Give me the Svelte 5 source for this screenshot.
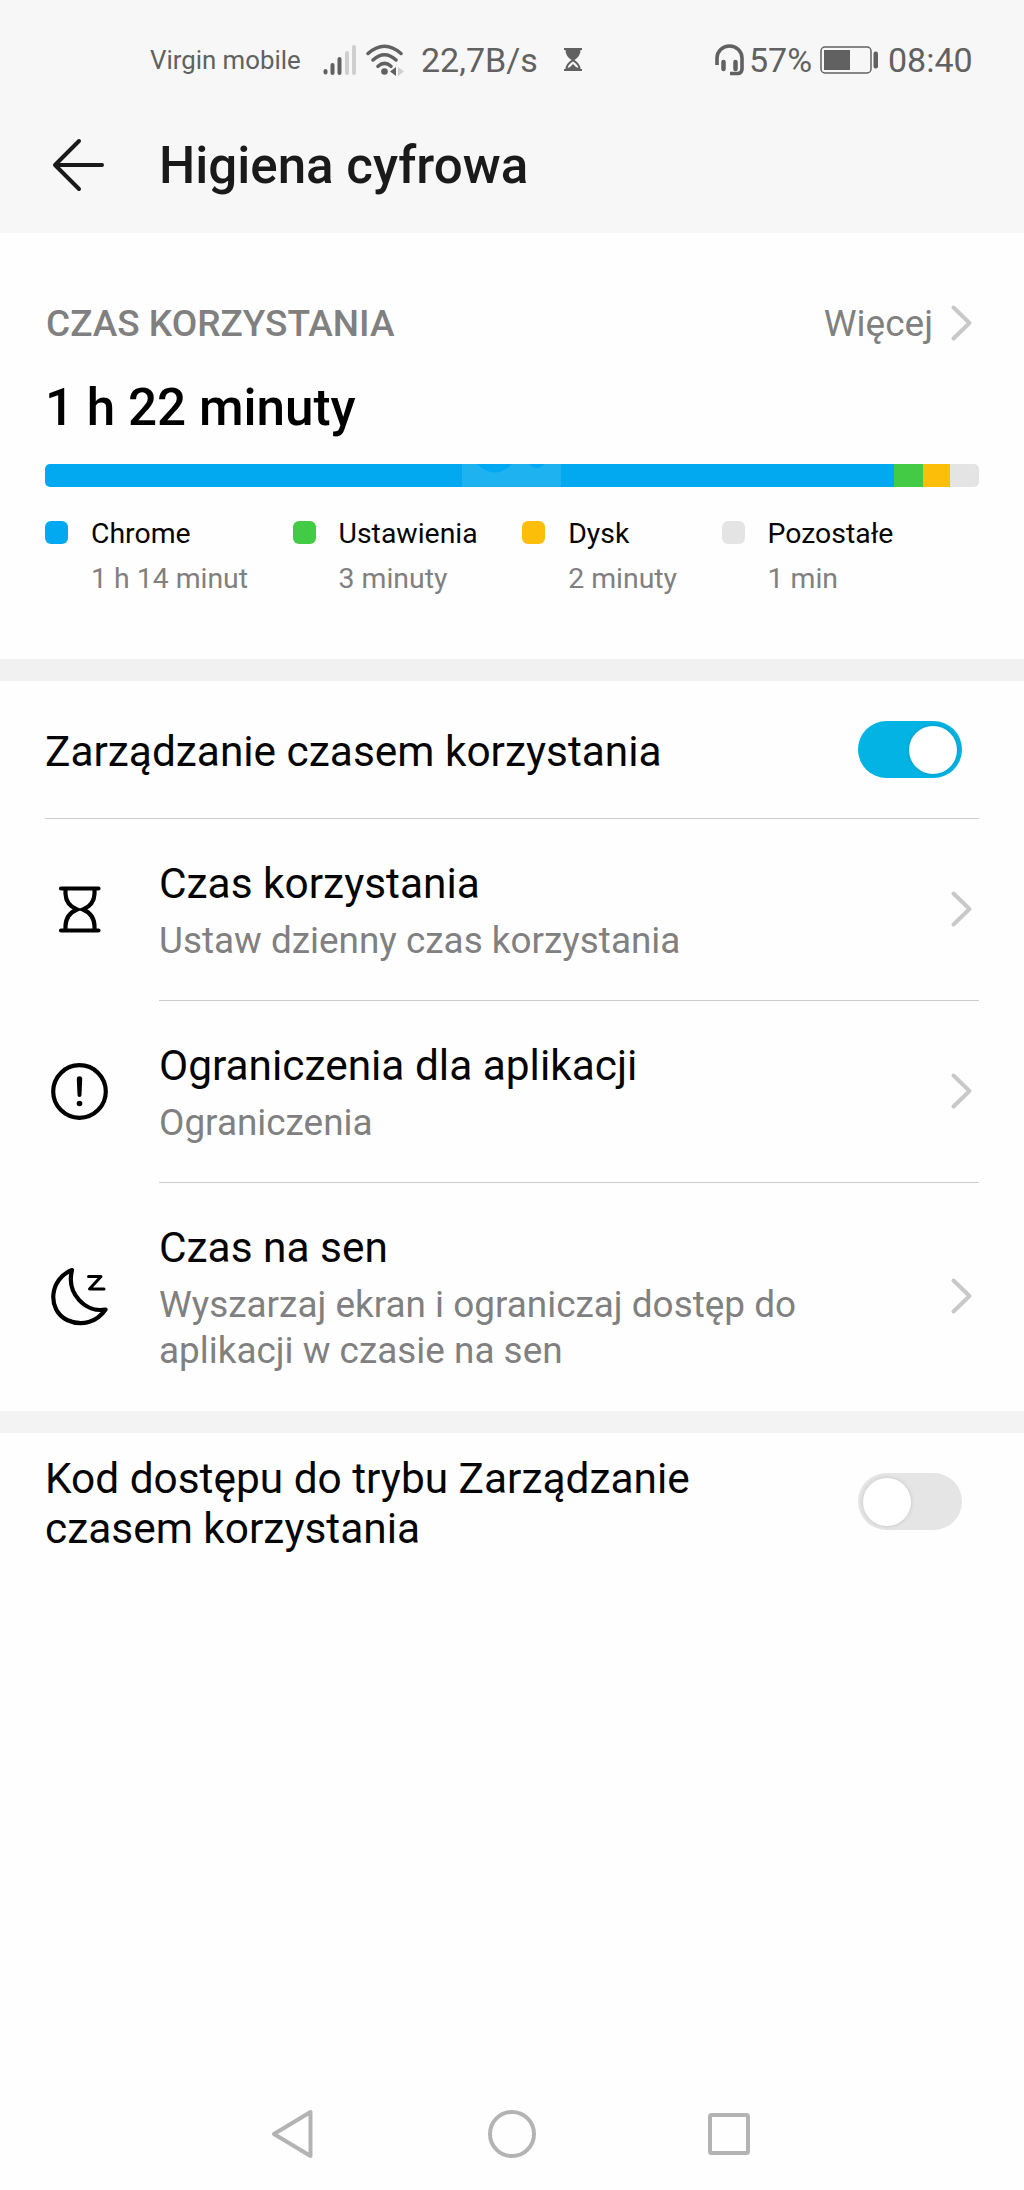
<script>
    let manageTime = true;
    let passcode = false;

    const apps = [
        { name: "Chrome", time: "1 h 14 minut", color: "#03a9f0", width: 849 },
        { name: "Ustawienia", time: "3 minuty", color: "#44cb46", width: 28.5 },
        { name: "Dysk", time: "2 minuty", color: "#fdbe09", width: 27.5 },
        { name: "Pozostałe", time: "1 min", color: "#e4e4e4", width: 29 }
    ];

    const options = [
        { icon: "hourglass", title: "Czas korzystania", text: "Ustaw dzienny czas korzystania" },
        { icon: "alert", title: "Ograniczenia dla aplikacji", text: "Ograniczenia" },
        { icon: "sleep", title: "Czas na sen", text: "Wyszarzaj ekran i ograniczaj dostęp do aplikacji w czasie na sen" }
    ];
</script>

{#snippet chevron()}
    <svg class="chevron" width="24" height="38" viewBox="0 0 24 38">
        <path d="M3.5 3.5 19.5 19 3.5 34.5" />
    </svg>
{/snippet}

<main>
    <header>
        <div class="status">
            <span class="carrier">Virgin mobile</span>
            <svg class="signal" width="34" height="32" viewBox="0 0 34 32" stroke-width="4" stroke-linecap="round">
                <path d="M2.5 28.500V27M9.500 29V21M16.500 29V15" stroke="#616161" />
                <path d="M24 29V9M31 29V3" stroke="#cfcfcf" />
            </svg>
            <svg class="wifi" width="38" height="32" viewBox="0 0 38 32" fill="none" stroke="#616161" stroke-width="3.500" stroke-linecap="round">
                <path d="M2 9.500Q18.500-5 35 9.500M7 16Q18.500 5.500 30 16M12 22.300Q18.500 16.500 25 22.300" />
                <circle cx="18.500" cy="27.500" r="3.300" fill="#616161" stroke="none" />
                <path d="M30 23v9l-6-4.500z" fill="#616161" stroke="none" />
                <path d="M32 23v9l6-4.500z" fill="#cfcfcf" stroke="none" />
            </svg>
            <span class="speed">22,7B/s</span>
            <svg class="glass" width="18" height="24" viewBox="0 0 18 24">
                <path d="M0 0h18v2h-1.500q0 6-6 10q6 4 6 9H18v2H0v-2h1.500q0-5 6-9q-6-4-6-10H0z" fill="#616161" />
                <path d="M9 13.500q-5 3-5.300 6.500q3-1 5.300-4q2.300 3 5.300 4Q14 16.500 9 13.500z" fill="#f7f7f7" />
            </svg>
            <svg class="headset" width="29" height="32" viewBox="0 0 29 32" fill="none" stroke="#616161">
                <path d="M2 21V14a12.500 12 0 0 1 25 0v11q0 4-4 4.500H15" stroke-width="3.600" />
                <path d="M8.500 18v7M20.500 18v7" stroke-width="4.500" stroke-linecap="round" />
            </svg>
            <span class="percent">57%</span>
            <svg class="battery" width="58" height="28" viewBox="0 0 58 28">
                <rect x="1" y="1" width="50" height="26" rx="4" fill="none" stroke="#616161" stroke-width="1.500" />
                <rect x="4" y="4" width="26" height="20" fill="#616161" />
                <rect x="53.500" y="5.500" width="4.500" height="17" rx="2" fill="#616161" />
            </svg>
            <span class="clock">08:40</span>
        </div>
        <div class="title-bar">
            <svg width="52" height="54" viewBox="0 0 52 54" fill="none" stroke="#1a1a1a" stroke-width="4" stroke-linecap="round" stroke-linejoin="round">
                <path d="M27 3 3 27 27 51M4 27H50" />
            </svg>
            <h1>Higiena cyfrowa</h1>
        </div>
    </header>

    <section class="usage">
        <div class="usage-head">
            <h2>CZAS KORZYSTANIA</h2>
            <span class="more">Więcej</span>
            {@render chevron()}
        </div>
        <div class="total">1 h 22 minuty</div>
        <div class="bar">
            {#each apps as app}
                <div style="flex-grow: {app.width}; background: {app.color}"></div>
            {/each}
            <svg class="sheen" width="99" height="23" viewBox="0 0 99 23">
                <path d="M0 0H15Q33 17 50 0H67Q74 8 83 0H99V23H0z" fill="#fff" fill-opacity="0.11" />
            </svg>
        </div>
        <div class="legend">
            {#each apps as app}
                <div class="app">
                    <i style="background: {app.color}"></i>
                    <div>
                        <div>{app.name}</div>
                        <div class="time">{app.time}</div>
                    </div>
                </div>
            {/each}
        </div>
    </section>

    <section class="manage">
        <div class="switch-row">
            <span>Zarządzanie czasem korzystania</span>
            <button class="toggle" class:on={manageTime} on:click={() => manageTime = !manageTime} aria-label="Zarządzanie czasem korzystania"><b></b></button>
        </div>
        {#each options as option}
            <div class="option">
                <svg class="icon" width="60" height="60" viewBox="0 0 60 60">
                    {#if option.icon === "hourglass"}
                        <path d="M11 8.500H48.500M11 50.500H48.500" stroke-linecap="round" />
                        <path d="M15.500 9V14Q16 25 27 29.500Q16 34 15.500 46V50M44.500 9V14Q44 25 33 29.500Q44 34 44.500 46V50" />
                    {:else if option.icon === "alert"}
                        <circle cx="29.500" cy="29.500" r="26.300" />
                        <path class="solid" d="M26.800 17a2.700 2.700 0 0 1 5.400 0L31.500 33a2 2 0 0 1-4 0z" />
                        <circle class="solid" cx="29.500" cy="41.500" r="2.800" />
                    {:else}
                        <path d="M22 3C-1 12-3 43 17 53C32 60 47 55 55.500 42.500C36 46 16 27 22 3z" stroke-linejoin="round" />
                        <path d="M38.500 9.500H51L39.500 22H54" stroke-width="3" stroke-linejoin="round" stroke-linecap="round" />
                    {/if}
                </svg>
                <div class="body">
                    <div class="text">
                        <h3>{option.title}</h3>
                        <p>{option.text}</p>
                    </div>
                    {@render chevron()}
                </div>
            </div>
        {/each}
    </section>

    <section class="passcode">
        <span>Kod dostępu do trybu Zarządzanie czasem korzystania</span>
        <button class="toggle" class:on={passcode} on:click={() => passcode = !passcode} aria-label="Kod dostępu"><b></b></button>
    </section>

    <nav>
        <svg width="48" height="50" viewBox="0 0 48 50"><path d="M39.500 3V47L3 25z" /></svg>
        <svg width="50" height="50" viewBox="0 0 50 50"><circle cx="25" cy="25" r="22" /></svg>
        <svg width="48" height="50" viewBox="0 0 48 50"><rect x="5" y="6" width="38" height="38" rx="1.500" /></svg>
    </nav>
</main>

<style>
    :global(body) {
        background: #fefefe;
    }

    main {
        display: flex;
        flex-direction: column;
        width: 1024px;
        height: 2190px;
        overflow: hidden;
        font-family: Roboto, sans-serif;
        color: #050505;
        background: #fefefe;
    }

    h1, h2, h3, p {
        margin: 0;
        font-weight: 400;
    }

    svg {
        flex: none;
    }

    header {
        height: 233px;
        background: #f7f7f7;
    }

    /* status bar */
    .status {
        display: flex;
        align-items: center;
        height: 120px;
        padding: 0 52px 0 150px;
        font-size: 34px;
        white-space: nowrap;
        color: #616161;
    }

    .carrier {
        width: 173px;
        font-size: 25.8px;
    }

    .signal {
        margin-right: 9px;
    }

    .wifi {
        margin-right: 17px;
    }

    .speed {
        width: 143px;
    }

    .headset {
        margin-left: auto;
    }

    .percent {
        width: 71px;
        padding-left: 5px;
    }

    .clock {
        width: 83px;
        padding-left: 10px;
        margin-right: 1px;
    }

    .title-bar {
        display: flex;
        align-items: center;
        gap: 55px;
        height: 90px;
        padding-left: 52px;
    }

    h1 {
        font-size: 51.1px;
        font-weight: 500;
        color: #1a1a1a;
    }

    /* usage summary */
    .usage {
        box-sizing: border-box;
        height: 426px;
        padding: 67px 45px 0;
    }

    .usage-head {
        display: flex;
        align-items: center;
        height: 46px;
        padding-right: 5px;
        font-size: 37px;
        color: #808080;
    }

    h2 {
        flex: 1;
        padding-left: 1px;
        font-size: 37px;
        font-weight: 500;
    }

    .more {
        margin-right: 17px;
    }

    .chevron {
        fill: none;
        stroke: #c8c8c8;
        stroke-width: 4;
        stroke-linecap: round;
        stroke-linejoin: round;
    }

    .total {
        margin-top: 32px;
        font-size: 51.2px;
        font-weight: 500;
        line-height: 60px;
        color: #000;
    }

    .bar {
        position: relative;
        display: flex;
        height: 23px;
        margin-top: 26px;
        border-radius: 5px;
        overflow: hidden;
    }

    .sheen {
        position: absolute;
        left: 417px;
        top: 0;
    }

    .legend {
        display: flex;
        gap: 44.5px;
        margin-top: 25px;
        font-size: 28.4px;
        line-height: 44.5px;
    }

    .app {
        display: flex;
        gap: 23px;
        white-space: nowrap;
    }

    .app i {
        width: 23px;
        height: 23px;
        margin-top: 9px;
        border-radius: 6px;
    }

    .time {
        color: #808080;
    }

    /* time management */
    .manage {
        height: 730px;
        border-top: 22px solid #f1f1f1;
        border-bottom: 22px solid #f3f3f3;
    }

    .switch-row {
        display: flex;
        align-items: center;
        justify-content: space-between;
        height: 137px;
        margin: 0 45px;
        padding-right: 17px;
        border-bottom: 1px solid #ccc;
        font-size: 42.4px;
    }

    .switch-row span {
        padding-top: 4px;
    }

    .toggle {
        flex: none;
        width: 104px;
        height: 57px;
        padding: 4px 5px;
        border: 0;
        border-radius: 29px;
        text-align: left;
        background: #e5e5e5;
    }

    .toggle.on {
        text-align: right;
        background: #03b3e3;
    }

    .toggle b {
        display: inline-block;
        width: 48px;
        height: 48px;
        border-radius: 50%;
        vertical-align: top;
        background: #fff;
        box-shadow: 0 0 4px rgba(0, 0, 0, 0.15);
    }

    .option {
        display: flex;
        align-items: center;
        padding: 0 45px 0 50px;
    }

    .icon {
        margin-right: 49px;
        fill: none;
        stroke: #000;
        stroke-width: 4.2;
    }

    .icon .solid {
        fill: #000;
        stroke: none;
    }

    .body {
        display: flex;
        flex: 1;
        align-items: center;
        justify-content: space-between;
        padding: 36px 5px 37px 0;
        border-bottom: 1px solid #ccc;
    }

    .option:last-child .body {
        border-bottom: 0;
    }

    .text {
        width: 680px;
        padding-top: 1px;
        margin-bottom: -1px;
    }

    h3 {
        font-size: 42.4px;
        line-height: 56px;
    }

    p {
        margin-top: 6px;
        font-size: 36.9px;
        line-height: 46px;
        color: #808080;
    }

    .passcode {
        display: flex;
        align-items: center;
        justify-content: space-between;
        height: 137px;
        padding: 0 62px 0 45px;
        font-size: 42.4px;
        line-height: 50px;
    }

    .passcode span {
        width: 680px;
        padding-top: 5px;
    }

    nav {
        display: flex;
        align-items: center;
        justify-content: space-between;
        margin: auto 271px 31px;
    }

    nav svg {
        fill: none;
        stroke: #b3b3b3;
        stroke-width: 4;
        stroke-linejoin: round;
    }
</style>
